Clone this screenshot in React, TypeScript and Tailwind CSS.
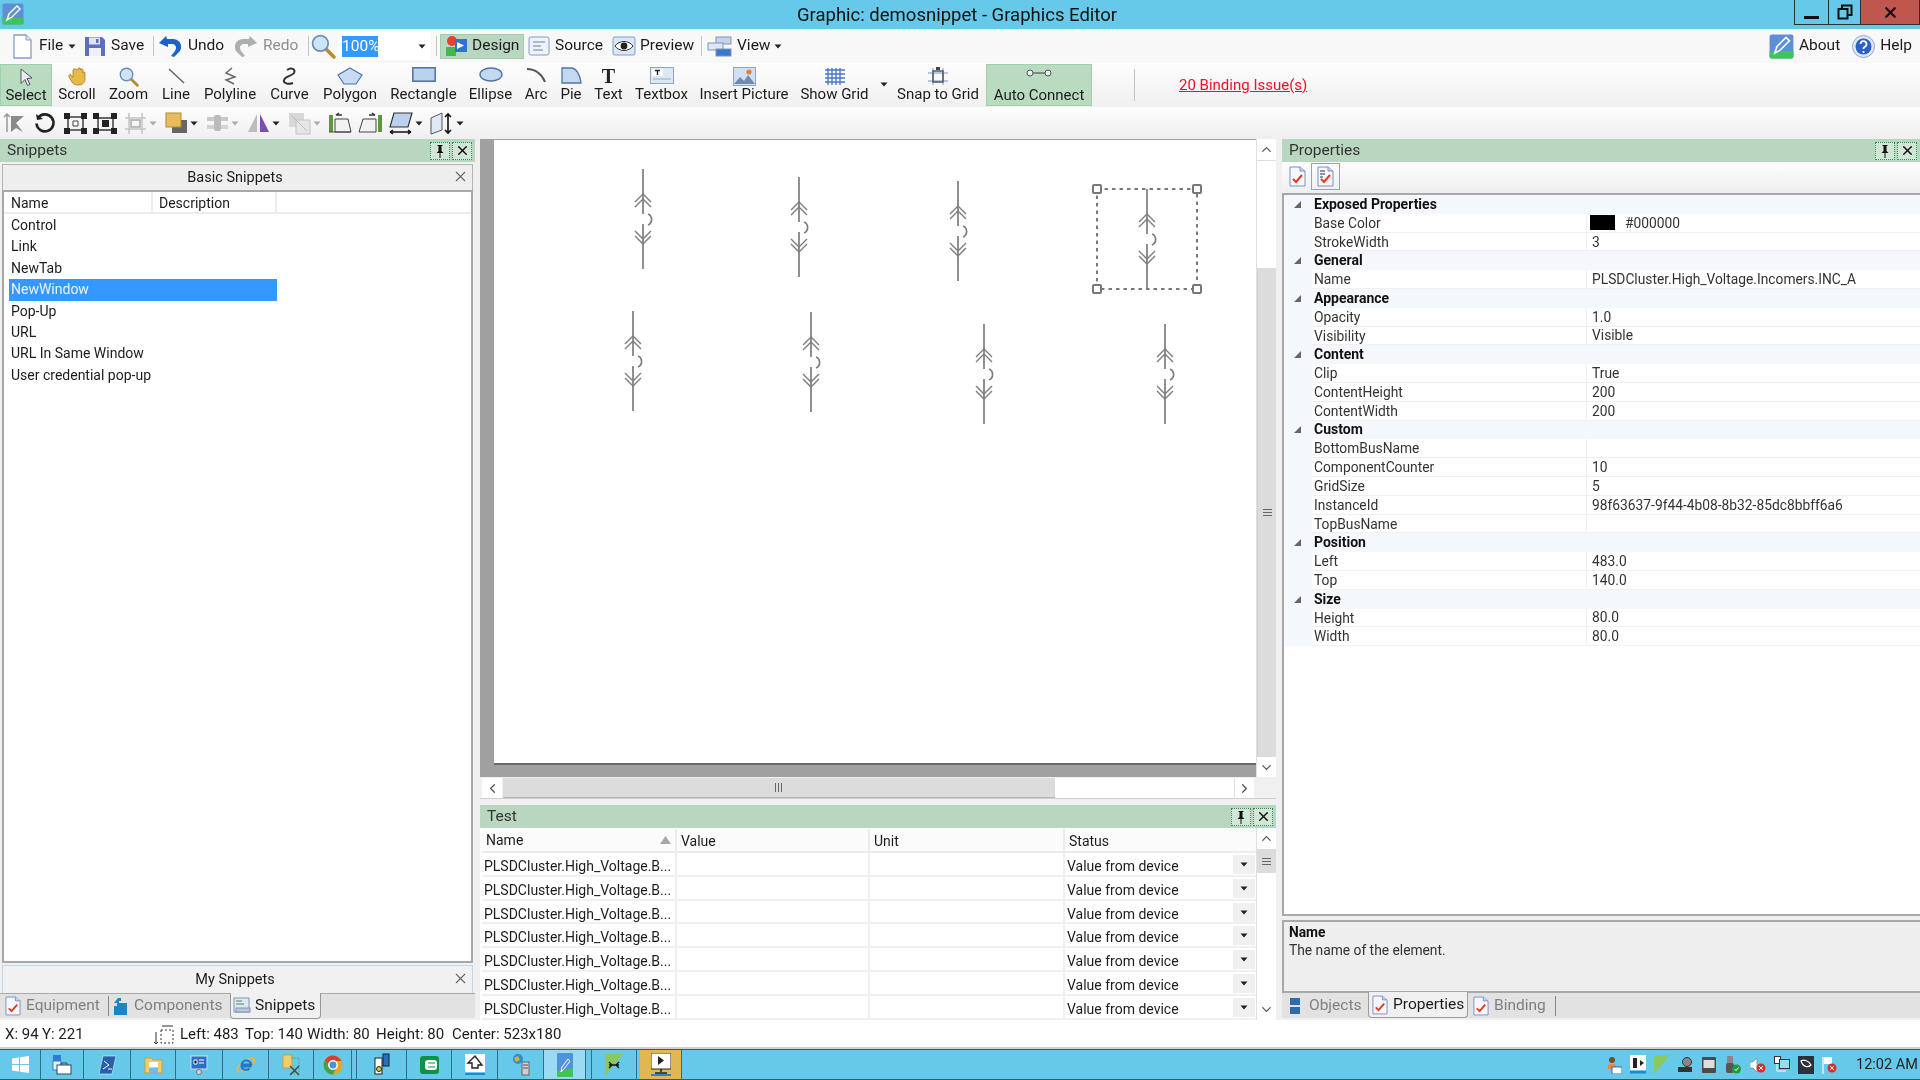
import React from "react";
import { ChevronUp, ChevronDown, ChevronLeft, ChevronRight, X } from "lucide-react";

const Ic = ({ w = 22, h = 22, vb = "0 0 22 22", children, className = "" }: any) => (
  <svg width={w} height={h} viewBox={vb} className={"shrink-0 " + className}>{children}</svg>
);
const Caret = ({ c = "#222" }: { c?: string }) => (
  <svg width="8" height="5" viewBox="0 0 8 5" className="shrink-0"><path d="M0.5 0.5h7L4 4.5z" fill={c} /></svg>
);
const Doc = ({ w = 21, h = 25 }: any) => (
  <Ic w={w} h={h} vb="0 0 21 25"><path d="M2 1h12l5 5v18H2z" fill="#fff" stroke="#8a9cc4" strokeWidth="1.3" /><path d="M14 1v5h5" fill="#dfe6f4" stroke="#8a9cc4" /></Ic>
);
const CheckDoc = ({ w = 17, h = 21, lines = false }: any) => (
  <Ic w={w} h={h} vb="0 0 17 21"><path d="M1 1h10l5 4v15H1z" fill="#f5f7fd" stroke="#7c8fc4" /><path d="M11 1v4h5" fill="#c9d4ee" stroke="#7c8fc4" />{lines && <path d="M3 5h5M3 8h5M3 11h3" stroke="#333" />}<path d="M4 13l3 3 6-7" fill="none" stroke="#e33b20" strokeWidth="2" /></Ic>
);
const Logo = ({ s = 22 }: any) => (
  <Ic w={s} h={s} vb="0 0 22 22"><rect x="0.5" y="0.5" width="21" height="21" rx="2" fill="#5c8fd6" /><path d="M0.5 15h21v5a1.5 1.5 0 0 1-1.5 1.5H2A1.5 1.5 0 0 1 .5 20z" fill="#3fc45a" /><path d="M5 17l2-6 8-8 3 3-8 8z" fill="none" stroke="#fff" strokeWidth="1.4" /></Ic>
);
const Glass = ({ s = 24 }: any) => (
  <Ic w={s} h={s} vb="0 0 24 24"><path d="M14 14l8 8" stroke="#b98a2e" strokeWidth="3.4" strokeLinecap="round" /><circle cx="9" cy="9" r="7.5" fill="#cfe3f7" stroke="#6c8db3" strokeWidth="1.6" /></Ic>
);

const Pin = () => (
  <span className="w-[20px] h-[18px] border border-dotted border-[#2f8f50] bg-[#d2e6d8] flex items-center justify-center">
    <svg width="10" height="14" viewBox="0 0 10 14"><path d="M2.5 1h5v1h-1v5l2 2H1.5l2-2V2h-1zM4.5 9h1v5h-1z" fill="#111" /></svg>
  </span>
);
const CloseB = () => (
  <span className="w-[20px] h-[18px] border border-dotted border-[#2f8f50] bg-[#d2e6d8] flex items-center justify-center">
    <X size={15} strokeWidth={2.4} color="#111" />
  </span>
);
const PanelHead = ({ title }: any) => (
  <div className="h-[23px] bg-[#b9d7c0] flex items-center justify-between pl-[7px] pr-[3px] text-[15.5px] text-[#333] shrink-0">
    <span>{title}</span>
    <span className="flex gap-[2px]"><Pin /><CloseB /></span>
  </div>
);

const Tool = ({ w, label, children, active }: any) => (
  <div className={w + " h-[42px] flex flex-col items-center shrink-0 " + (active ? "bg-[#b9dcc0] border border-[#9fd0a9]" : "")}>
    <div className="h-[20px] pt-[3px] flex items-start justify-center">{children}</div>
    <div className="text-[15px] leading-[20px] whitespace-nowrap text-[#1c1c1c]">{label}</div>
  </div>
);

const Sep = ({ cls = "" }: any) => <div className={"w-px h-[20px] bg-[#c4c4c4] shrink-0 " + cls} />;

const Symbol = ({ pos }: { pos: string }) => (
  <svg width="24" height="100" viewBox="0 0 24 100" className={"absolute " + pos}>
    <g fill="none" stroke="#7d7d7d" strokeWidth="1.7">
      <path d="M12 0v45M12 55v45" />
      <path d="M4 33l8-8 8 8M4 38l8-8 8 8" strokeWidth="1.4" />
      <path d="M4 62l8 8 8-8M4 67l8 8 8-8" strokeWidth="1.4" />
      <path d="M17 45a6 6 0 0 1 0 11" />
    </g>
  </svg>
);

const Handle = ({ pos }: { pos: string }) => <div className={"absolute w-[10px] h-[10px] border-2 border-[#777] bg-white rounded-[2px] " + pos} />;

const props: [string, string?, string?][] = [
  ["g", "Exposed Properties"], ["r", "Base Color", "#000000"], ["r", "StrokeWidth", "3"],
  ["g", "General"], ["r", "Name", "PLSDCluster.High_Voltage.Incomers.INC_A"],
  ["g", "Appearance"], ["r", "Opacity", "1.0"], ["r", "Visibility", "Visible"],
  ["g", "Content"], ["r", "Clip", "True"], ["r", "ContentHeight", "200"], ["r", "ContentWidth", "200"],
  ["g", "Custom"], ["r", "BottomBusName", ""], ["r", "ComponentCounter", "10"], ["r", "GridSize", "5"],
  ["r", "InstanceId", "98f63637-9f44-4b08-8b32-85dc8bbff6a6"], ["r", "TopBusName", ""],
  ["g", "Position"], ["r", "Left", "483.0"], ["r", "Top", "140.0"],
  ["g", "Size"], ["r", "Height", "80.0"], ["r", "Width", "80.0"],
];

const snippets = ["Control", "Link", "NewTab", "NewWindow", "Pop-Up", "URL", "URL In Same Window", "User credential pop-up"];

const TaskBtn = ({ w, cls = "", children }: any) => (
  <div className={w + " h-full border-r border-[#2f6f88] flex items-center justify-center shrink-0 " + cls}>{children}</div>
);

export default function App() {
  return (
    <div className="w-[1920px] h-[1080px] overflow-hidden flex flex-col bg-[#f0f0f0] font-['Roboto',sans-serif] text-[14px] text-[#1c1c1c] blur-[0.35px]">
      {/* Title bar */}
      <div className="h-[29px] bg-[#66c9ea] grid grid-cols-[126px_1fr_126px] shrink-0">
        <div className="pl-[2px] pt-[3px]"><Logo /></div>
        <div className="text-center text-[18.5px] leading-[30px] pr-[6px] text-[#111]">Graphic: demosnippet - Graphics Editor</div>
        <div className="flex h-[25px] border border-t-0 border-[#26323a]">
          <div className="w-[34px] border-r border-[#26323a] flex items-end justify-center pb-[5px]"><div className="w-[15px] h-[3px] bg-[#111]" /></div>
          <div className="w-[32px] border-r border-[#26323a] flex items-center justify-center">
            <svg width="16" height="16" viewBox="0 0 16 16"><path d="M1.5 5h9v9.500h-9zM5 4.500V1.500h9.500V11H11" fill="none" stroke="#111" strokeWidth="2" /></svg>
          </div>
          <div className="flex-1 bg-[#c0574f] flex items-center justify-center"><X size={17} strokeWidth={3.2} color="#111" /></div>
        </div>
      </div>

      {/* Menu row */}
      <div className="h-[34px] bg-[#f8f8f8] flex items-center shrink-0 pl-[12px] pr-[8px] text-[15.5px] whitespace-nowrap">
        <Doc />
        <span className="ml-[6px] w-[24px]">File</span>
        <span className="ml-[5px]"><Caret /></span>
        <span className="ml-[8px]">
          <Ic w={22} h={21} vb="0 0 22 21"><path d="M1 1h17l3 3v16H1z" fill="#5f6fc0" /><rect x="5" y="1.500" width="11" height="7" fill="#dfe4f7" /><rect x="5" y="12" width="12" height="8" fill="#eef0fa" /><rect x="12" y="3" width="2.500" height="4" fill="#5f6fc0" /></Ic>
        </span>
        <span className="ml-[5px] w-[31px]">Save</span>
        <Sep cls="ml-[11px]" />
        <span className="ml-[4px]">
          <Ic w={24} h={23} vb="0 0 24 23"><path d="M8 1L1 8l9 4V9h4c4 0 5 4 3 7l-4 5 3 1 6-6c3-5 0-12-7-12H9z" fill="#1c62c9" /></Ic>
        </span>
        <span className="ml-[6px] w-[36px]">Undo</span>
        <span className="ml-[10px]">
          <Ic w={24} h={23} vb="0 0 24 23"><path d="M16 1l7 7-9 4V9h-4C6 9 5 13 7 16l4 5-3 1-6-6C-1 11 2 4 9 4h6z" fill="#aab0b0" /></Ic>
        </span>
        <span className="ml-[5px] w-[33px] text-[#8f8f8f]">Redo</span>
        <Sep cls="ml-[12px]" />
        <span className="ml-[2px]"><Glass s={25} /></span>
        <div className="ml-[2px] w-[93px] h-[28px] bg-white flex items-center pl-[4px] pr-[5px] justify-between">
          <span className="bg-[#3399ff] text-white w-[36px] h-[21px] leading-[21px]">100%</span>
          <Caret />
        </div>
        <Sep cls="ml-[5px]" />
        <div className="ml-[3px] w-[84px] h-[25px] bg-[#b9d7c0] border border-[#9fcca9] flex items-center pl-[4px] gap-[4px]">
          <Ic w={23} h={22} vb="0 0 23 22"><circle cx="7" cy="6" r="5" fill="#e8402c" /><rect x="1" y="12" width="10" height="9" fill="#46b84a" /><path d="M10 4h12v13H10z" fill="#2b74d0" /><path d="M12 7l7 3.500-7 3.500z" fill="#fff" /></Ic>
          <span>Design</span>
        </div>
        <span className="ml-[4px]">
          <Ic w={22} h={20} vb="0 0 22 20"><rect x="1" y="1" width="20" height="18" rx="2" fill="#eef3fb" stroke="#7f9cc8" /><path d="M5 6h12M5 10h8M5 14h10" stroke="#6f7f96" /></Ic>
        </span>
        <span className="ml-[5px] w-[45px]">Source</span>
        <span className="ml-[12px]">
          <Ic w={24} h={20} vb="0 0 24 20"><rect x="1" y="1" width="22" height="18" rx="2" fill="#dbe7f7" stroke="#7f9cc8" /><path d="M3 10c4-6 14-6 18 0-4 6-14 6-18 0z" fill="#fff" stroke="#333" /><circle cx="12" cy="10" r="3.400" fill="#222" /></Ic>
        </span>
        <span className="ml-[4px] w-[50px]">Preview</span>
        <Sep cls="ml-[11px]" />
        <span className="ml-[5px]">
          <Ic w={25} h={21} vb="0 0 25 21"><rect x="9" y="1" width="15" height="7" fill="#c6d4ea" stroke="#7f94b8" /><rect x="1" y="7" width="15" height="7" fill="#dfe7f4" stroke="#7f94b8" /><rect x="9" y="13" width="15" height="7" fill="#3a78cf" stroke="#7f94b8" /></Ic>
        </span>
        <span className="ml-[5px] w-[30px]">View</span>
        <span className="ml-[7px]"><Caret /></span>
        <div className="flex-1" />
        <Logo s={25} />
        <span className="ml-[5px]">About</span>
        <span className="ml-[11px]">
          <Ic w={25} h={25} vb="0 0 25 25"><circle cx="12.500" cy="12.500" r="11" fill="#dfe6f4" stroke="#9aa9c9" /><circle cx="12.500" cy="12.500" r="8" fill="#2a5fc4" /><path d="M9.500 10a3 3 0 1 1 4 3c-1 .5-1 1-1 2" fill="none" stroke="#fff" strokeWidth="1.800" /><circle cx="12.500" cy="18" r="1.100" fill="#fff" /></Ic>
        </span>
        <span className="ml-[4px]">Help</span>
      </div>

      {/* Tool row */}
      <div className="h-[44px] bg-gradient-to-b from-[#fdfdfd] to-[#f0f0f0] flex items-center shrink-0">
        <Tool w="w-[52px]" label="Select" active>
          <Ic w={15} h={18} vb="0 0 15 18"><path d="M2 1l11 9-5 .5 3 6-2.500 1-2.500-6-4 4z" fill="#e8eef8" stroke="#555" /></Ic>
        </Tool>
        <Tool w="w-[50px]" label="Scroll">
          <Ic w={22} h={19} vb="0 0 22 19"><path d="M3 10l3 5c1 2 3 3 6 3 4 0 7-2 7-6V6c0-1.500-2-1.500-2 0V3c0-1.500-2.500-1.500-2.500 0V2c0-1.500-2.500-1.500-2.500 0v1C9.500 1.500 7 1.500 7 3v7L5 8c-1-1-3 0-2 2z" fill="#e9b84a" stroke="#a87b22" strokeWidth=".8" /></Ic>
        </Tool>
        <Tool w="w-[53px]" label="Zoom"><Glass s={20} /></Tool>
        <Tool w="w-[42px]" label="Line">
          <Ic w={20} h={18} vb="0 0 20 18"><path d="M3 2l15 14" stroke="#666" strokeWidth="1.500" /></Ic>
        </Tool>
        <Tool w="w-[66px]" label="Polyline">
          <Ic w={14} h={18} vb="0 0 14 18"><path d="M9 1L3 6l9 4-9 3 8 4" fill="none" stroke="#666" strokeWidth="1.400" /></Ic>
        </Tool>
        <Tool w="w-[53px]" label="Curve">
          <Ic w={16} h={19} vb="0 0 16 19"><path d="M5 3c4-3 9-1 7 3-2 3-9 3-10 7-1 3 4 5 9 3" fill="none" stroke="#333" strokeWidth="2" /></Ic>
        </Tool>
        <Tool w="w-[68px]" label="Polygon">
          <Ic w={26} h={18} vb="0 0 26 18"><path d="M13 1l12 7-6 9H7L1 8z" fill="#c7dcf2" stroke="#4f74a8" strokeWidth="1.200" /></Ic>
        </Tool>
        <Tool w="w-[79px]" label="Rectangle">
          <Ic w={24} h={15} vb="0 0 24 15"><rect x=".8" y=".8" width="22.400" height="13.400" fill="#b9d3ef" stroke="#4f6f9e" strokeWidth="1.500" /></Ic>
        </Tool>
        <Tool w="w-[55px]" label="Ellipse">
          <Ic w={24} h={15} vb="0 0 24 15"><ellipse cx="12" cy="7.500" rx="11" ry="6.500" fill="#c3d9f0" stroke="#4f74a8" strokeWidth="1.400" /></Ic>
        </Tool>
        <Tool w="w-[36px]" label="Arc">
          <Ic w={20} h={16} vb="0 0 20 16"><path d="M1 2c8 0 15 5 18 13" fill="none" stroke="#555" strokeWidth="2" /></Ic>
        </Tool>
        <Tool w="w-[34px]" label="Pie">
          <Ic w={21} h={17} vb="0 0 21 17"><path d="M1 1h9c5 0 9 6 10 15H1z" fill="#c3d9f0" stroke="#4f74a8" strokeWidth="1.300" /></Ic>
        </Tool>
        <Tool w="w-[41px]" label="Text">
          <span className="font-['Liberation_Serif',serif] font-bold text-[20px] leading-[18px] text-[#222]">T</span>
        </Tool>
        <Tool w="w-[65px]" label="Textbox">
          <Ic w={24} h={17} vb="0 0 24 17"><rect x=".5" y=".5" width="23" height="16" fill="#dce8f5" stroke="#8fa6c4" /><rect x="2" y="2" width="11" height="7" fill="#fff" /><path d="M5 3.500h5M7.500 3.500v4.500" stroke="#222" strokeWidth="1.400" /><path d="M3 12h18" stroke="#9ab" /></Ic>
        </Tool>
        <Tool w="w-[100px]" label="Insert Picture">
          <Ic w={23} h={19} vb="0 0 23 19"><rect x=".5" y=".5" width="22" height="18" fill="#cfe0f2" stroke="#8fa6c4" /><path d="M1 17l6-7 4 4 4-6 7 9z" fill="#6f8cb0" /><circle cx="16" cy="5" r="2.600" fill="#e8803a" /></Ic>
        </Tool>
        <Tool w="w-[81px]" label="Show Grid">
          <Ic w={22} h={19} vb="0 0 22 19"><path d="M4 1v17M8 1v17M12 1v17M16 1v17M1 3h20M1 7h20M1 11h20M1 15h20" stroke="#4a78c9" strokeWidth="1.400" /></Ic>
        </Tool>
        <div className="w-[15px] h-[42px] pt-[18px] pl-[5px] shrink-0"><Caret /></div>
        <Tool w="w-[96px]" label="Snap to Grid">
          <Ic w={24} h={19} vb="0 0 24 19"><path d="M2 6h20M2 14h20M7 1v17M17 1v17" stroke="#9ab8dc" strokeWidth="1.400" /><rect x="7" y="4" width="10" height="11" fill="none" stroke="#556" strokeWidth="1.500" /><rect x="10" y="0" width="4" height="3" fill="#445" /></Ic>
        </Tool>
        <Tool w="w-[106px]" label="Auto Connect" active>
          <Ic w={26} h={10} vb="0 0 26 10"><circle cx="4" cy="5" r="3" fill="#e8eef4" stroke="#555" /><circle cx="22" cy="5" r="3" fill="#e8eef4" stroke="#555" /><path d="M7 5h12" stroke="#555" strokeWidth="1.200" /></Ic>
        </Tool>
        <div className="ml-[42px] w-px h-[32px] bg-[#c4c4c4]" />
        <a className="ml-[44px] text-[#f0102a] underline text-[15px]">20 Binding Issue(s)</a>
      </div>

      {/* Icon row */}
      <div className="h-[32px] bg-gradient-to-b from-[#fdfdfd] to-[#efefef] flex items-center pl-[3px] shrink-0">
        <Ic w={22} h={22}><path d="M4 2v18M1 5l3-3 3 3" stroke="#999" strokeWidth="1.500" fill="none" /><path d="M8 4h13L13 11l7 9-7-4-5 4z" fill="#8a8a8a" /></Ic>
        <span className="ml-[8px]"><Ic w={23} h={23} vb="0 0 23 23"><path d="M5 6a8.500 8.500 0 1 1-1.500 5.500" fill="none" stroke="#222" strokeWidth="2.600" /><path d="M3 2l1 6 6-1z" fill="#222" /></Ic></span>
        <span className="ml-[7px]"><Ic w={25} h={23} vb="0 0 25 23"><rect x="5" y="5" width="15" height="13" fill="none" stroke="#333" strokeWidth="1.400" /><path d="M1 1h6v6H1zM18 1h6v6h-6zM1 16h6v6H1zM18 16h6v6h-6z" fill="#222" /><path d="M10 9h5v5h-5z" fill="#fff" stroke="#444" /></Ic></span>
        <span className="ml-[4px]"><Ic w={26} h={23} vb="0 0 26 23"><path d="M6 6h15v12H6z" fill="none" stroke="#333" strokeWidth="1.400" /><path d="M1 1h6v6H1zM19 1h6v6h-6zM1 16h6v6H1zM19 16h6v6h-6zM10 8h7v7h-7z" fill="#222" /></Ic></span>
        <span className="ml-[6px]"><Ic w={23} h={23} vb="0 0 23 23"><path d="M5 1v21M18 1v21M1 6h21M1 17h21" stroke="#c3c3c3" strokeWidth="1.500" /><rect x="7" y="8" width="9" height="7" fill="none" stroke="#aaa" strokeWidth="1.500" /></Ic></span>
        <span className="ml-[2px]"><Caret c="#aaa" /></span>
        <span className="ml-[8px]"><Ic w={23} h={22} vb="0 0 23 22"><rect x="7" y="8" width="15" height="13" fill="#666" /><rect x="1" y="1" width="15" height="14" fill="#e8bc5a" stroke="#b48a2e" /></Ic></span>
        <span className="ml-[2px]"><Caret /></span>
        <span className="ml-[8px]"><Ic w={23} h={22} vb="0 0 23 22"><rect x="1" y="5" width="21" height="4" fill="#c9c9c9" /><rect x="1" y="13" width="21" height="4" fill="#d4d4d4" /><rect x="8" y="3" width="7" height="16" rx="2" fill="#bbb" /></Ic></span>
        <span className="ml-[2px]"><Caret c="#aaa" /></span>
        <span className="ml-[8px]"><Ic w={23} h={22} vb="0 0 23 22"><path d="M10 2v18H1z" fill="#b9bcc4" /><path d="M13 2v18h9z" fill="#7c4cb0" /></Ic></span>
        <span className="ml-[2px]"><Caret /></span>
        <span className="ml-[8px]"><Ic w={23} h={23} vb="0 0 23 23"><rect x="1" y="1" width="15" height="14" fill="#d8d8d8" /><rect x="8" y="8" width="14" height="14" fill="#e6e6e6" stroke="#c4c4c4" /><path d="M3 3l16 16" stroke="#bbb" /></Ic></span>
        <span className="ml-[2px]"><Caret c="#aaa" /></span>
        <span className="ml-[7px]"><Ic w={24} h={22} vb="0 0 24 22"><rect x="1" y="3" width="4" height="17" fill="#5a9a3c" /><path d="M7 20V7h13l3 13z" fill="#f2f2f2" stroke="#444" /><path d="M8 3h6M8 3l3-2" stroke="#333" strokeWidth="1.400" /><path d="M1 20h22" stroke="#444" /></Ic></span>
        <span className="ml-[6px]"><Ic w={25} h={22} vb="0 0 25 22"><rect x="20" y="3" width="4" height="17" fill="#5a9a3c" /><path d="M18 20V7H5L1 20z" fill="#f2f2f2" stroke="#444" /><path d="M17 3h-6M17 3l-3-2" stroke="#333" strokeWidth="1.400" /></Ic></span>
        <span className="ml-[5px]"><Ic w={25} h={23} vb="0 0 25 23"><path d="M6 1h18l-4 14H2z" fill="#bcd2ec" stroke="#333" strokeWidth="1.200" /><path d="M2 20h21M2 20l3-2M2 20l3 2M23 20l-3-2M23 20l-3 2" stroke="#111" strokeWidth="1.500" fill="none" /></Ic></span>
        <span className="ml-[2px]"><Caret /></span>
        <span className="ml-[7px]"><Ic w={25} h={23} vb="0 0 25 23"><path d="M1 6l11-5v17L1 22z" fill="#dfe8f5" stroke="#555" /><path d="M18 2v19M15 5l3-3 3 3M15 18l3 3 3-3" stroke="#111" strokeWidth="1.600" fill="none" /></Ic></span>
        <span className="ml-[1px]"><Caret /></span>
      </div>

      {/* Main */}
      <div className="h-[881px] flex shrink-0">
        {/* Left */}
        <div className="w-[475px] flex flex-col shrink-0">
          <PanelHead title="Snippets" />
          <div className="mx-[2px] mt-[2px] h-[26px] bg-[#eeeeee] border border-b-0 border-[#b4b4b4] relative flex items-center justify-center pr-[5px] text-[14.500px] shrink-0">
            Basic Snippets
            <X size={17} strokeWidth={1.600} color="#666" className="absolute right-[3px] top-[3px]" />
          </div>
          <div className="mx-[2px] flex-1 bg-white border-2 border-[#a8a8a8]">
            <div className="h-[22px] flex text-[14px] leading-[23px] border-b-2 border-[#ebebeb] pl-[1px]">
              <div className="w-[148px] pl-[6px] border-r-2 border-[#ebebeb]">Name</div>
              <div className="w-[124px] pl-[6px] border-r-2 border-[#ebebeb]">Description</div>
            </div>
            <div className="pt-[1px] pl-[5px]">
              {snippets.map((s) => (
                <div key={s} className={"h-[21.400px] leading-[21px] pl-[2px] text-[14px] whitespace-nowrap w-[268px] " + (s === "NewWindow" ? "bg-[#3399ff] text-[#eaf4ff]" : "")}>{s}</div>
              ))}
            </div>
          </div>
          <div className="mx-[2px] mt-[2px] h-[28px] bg-[#f1f1f1] border border-b-0 border-[#bcd7f0] relative flex items-center justify-center pr-[5px] text-[14.500px] shrink-0">
            My Snippets
            <X size={17} strokeWidth={1.600} color="#666" className="absolute right-[3px] top-[4px]" />
          </div>
          <div className="h-[25px] bg-[#e2e2e2] border-t border-[#a8a8a8] flex items-center text-[15.500px] shrink-0 pl-[5px] relative whitespace-nowrap">
            <CheckDoc w={16} h={20} />
            <span className="ml-[5px] w-[73px] text-[#808080]">Equipment</span>
            <div className="ml-[9px] w-px h-[20px] bg-[#888]" />
            <span className="ml-[4px]"><Ic w={16} h={18} vb="0 0 16 18"><path d="M5 1h3v3h-2v2h8v12H1V9h3V6H1z" fill="#1a86c8" /></Ic></span>
            <span className="ml-[5px] w-[87px] text-[#808080]">Components</span>
            <div className="ml-[9px] w-[91px] h-[26px] bg-[#f0f0f0] border border-t-0 border-[#9a9a9a] rounded-b-[4px] flex items-center pl-[2px] gap-[4px] text-[#1c1c1c]">
              <Ic w={18} h={17} vb="0 0 18 17"><rect x="1" y="1" width="15" height="14" fill="#dfe8f2" stroke="#7f94b8" /><path d="M3 4h6M3 7h8" stroke="#4c8c4c" /><rect x="3" y="11" width="14" height="4" fill="#bcc7d6" stroke="#7f94b8" /></Ic>
              <span>Snippets</span>
            </div>
          </div>
          <div className="h-[2px] shrink-0" />
        </div>

        {/* Center */}
        <div className="w-[796px] ml-[5px] flex flex-col shrink-0">
          <div className="h-[638px] flex shrink-0">
            <div className="w-[776px] bg-[#a0a0a0] pl-[14px] pt-[1px] shrink-0">
              <div className="w-[762px] h-[625px] bg-white relative border-b-2 border-[#6a6a6a]">
                <Symbol pos="left-[137px] top-[29px]" />
                <Symbol pos="left-[293px] top-[36.500px]" />
                <Symbol pos="left-[452px] top-[41px]" />
                <Symbol pos="left-[641px] top-[49px]" />
                <Symbol pos="left-[127px] top-[171px]" />
                <Symbol pos="left-[305px] top-[172px]" />
                <Symbol pos="left-[478px] top-[184px]" />
                <Symbol pos="left-[659px] top-[184px]" />
                <svg width="110" height="110" viewBox="0 0 110 110" className="absolute left-[598px] top-[44px]">
                  <rect x="5" y="5" width="100" height="100" fill="none" stroke="#7a7a7a" strokeWidth="2" strokeDasharray="3.500 4" />
                </svg>
                <Handle pos="left-[598px] top-[44px]" />
                <Handle pos="left-[698px] top-[44px]" />
                <Handle pos="left-[598px] top-[144px]" />
                <Handle pos="left-[698px] top-[144px]" />
              </div>
            </div>
            <div className="w-[20px] bg-white flex flex-col border-l border-[#e0e0e0] shrink-0">
              <div className="h-[22px] flex items-center justify-center border-b border-[#ddd] shrink-0"><ChevronUp size={15} color="#555" /></div>
              <div className="h-[107px] shrink-0" />
              <div className="flex-1 bg-[#dcdcdc] flex flex-col items-center justify-center gap-[2px] border-l border-[#cfcfcf]">
                <div className="w-[9px] h-px bg-[#666]" /><div className="w-[9px] h-px bg-[#666]" /><div className="w-[9px] h-px bg-[#666]" />
              </div>
              <div className="h-[20px] flex items-center justify-center shrink-0"><ChevronDown size={15} color="#555" /></div>
            </div>
          </div>
          <div className="h-[20px] mt-[1px] flex items-stretch pl-[2px] bg-[#f0f0f0] shrink-0">
            <div className="w-[20px] bg-white flex items-center justify-center"><ChevronLeft size={15} color="#555" /></div>
            <div className="w-[552px] ml-[1px] bg-[#dcdcdc] border-b border-[#b4b4b4] flex items-center justify-center gap-[2px] pr-[2px]">
              <div className="w-px h-[9px] bg-[#666]" /><div className="w-px h-[9px] bg-[#666]" /><div className="w-px h-[9px] bg-[#666]" />
            </div>
            <div className="w-[179px] bg-white" />
            <div className="w-[20px] bg-white border-l border-[#ddd] flex items-center justify-center"><ChevronRight size={15} color="#555" /></div>
          </div>
          <div className="h-[7px] shrink-0 border-t border-[#cfcfcf]" />
          <PanelHead title="Test" />
          <div className="flex-1 flex border-b-2 border-[#b0b0b0] bg-white">
            <div className="w-[776px] shrink-0 pl-[2px] pt-[1px]">
              <div className="h-[24px] grid grid-cols-[195px_193px_195px_1fr] grid-rows-[22px] text-[14px] leading-[24px] border-b-2 border-[#ebebeb] bg-[#fbfbfb]">
                <div className="pl-[4px] border-r-2 border-[#ebebeb] flex items-center justify-between pr-[4px]">Name<svg width="11" height="8" viewBox="0 0 11 8"><path d="M5.500 0L11 8H0z" fill="#a8a8a8" /></svg></div>
                <div className="pl-[4px] border-r-2 border-[#ebebeb]">Value</div>
                <div className="pl-[4px] border-r-2 border-[#ebebeb]">Unit</div>
                <div className="pl-[4px]">Status</div>
              </div>
              {[0, 1, 2, 3, 4, 5, 6].map((i) => (
                <div key={i} className="h-[23.800px] grid grid-cols-[195px_193px_195px_1fr] grid-rows-[21.800px] text-[14px] leading-[22px] border-b-2 border-[#f0f0f0]">
                  <div className="pl-[2px] pt-[2px] border-r-2 border-[#f0f0f0] whitespace-nowrap overflow-hidden">PLSDCluster.High_Voltage.B...</div>
                  <div className="border-r-2 border-[#f0f0f0]" />
                  <div className="border-r-2 border-[#f0f0f0]" />
                  <div className="pl-[2px] flex justify-between">
                    <span className="pt-[2px]">Value from device</span>
                    <span className="w-[22px] h-[19px] mt-[2px] mr-[1px] bg-[#f0f0f0] flex items-center justify-center"><Caret /></span>
                  </div>
                </div>
              ))}
            </div>
            <div className="flex-1 flex flex-col border-l border-[#e0e0e0]">
              <div className="h-[21px] flex items-center justify-center shrink-0"><ChevronUp size={15} color="#555" /></div>
              <div className="h-[24px] bg-[#dcdcdc] flex flex-col items-center justify-center gap-[2px] shrink-0">
                <div className="w-[9px] h-px bg-[#666]" /><div className="w-[9px] h-px bg-[#666]" /><div className="w-[9px] h-px bg-[#666]" />
              </div>
              <div className="flex-1" />
              <div className="h-[20px] flex items-center justify-center shrink-0"><ChevronDown size={15} color="#555" /></div>
            </div>
          </div>
          <div className="h-[2px] shrink-0" />
        </div>

        {/* Right */}
        <div className="flex-1 ml-[6px] flex flex-col min-w-0">
          <PanelHead title="Properties" />
          <div className="h-[31px] bg-gradient-to-b from-[#fdfdfd] to-[#efefef] flex items-start pt-[1px] pl-[7px] shrink-0">
            <span className="pt-[3px]"><CheckDoc /></span>
            <div className="ml-[5px] w-[29px] h-[27px] border border-[#66adff] flex items-center justify-center"><CheckDoc lines /></div>
          </div>
          <div className="h-[723px] border-2 border-r-0 border-[#a8a8a8] bg-white shrink-0">
            {props.map(([t, a, b]) =>
              t === "g" ? (
                <div key={a} className="h-[18.800px] bg-[#f4f7fc] flex items-center font-bold text-[14px] text-[#111] whitespace-nowrap">
                  <span className="w-[28px] pl-[9px]"><svg width="9" height="9" viewBox="0 0 9 9"><path d="M8 1v7H1z" fill="#666" /></svg></span>
                  <span className="pl-[2px]">{a}</span>
                </div>
              ) : (
                <div key={a} className="h-[18.800px] flex items-stretch bg-[#f4f7fc] text-[13.800px] text-[#333]">
                  <div className="w-[28px] shrink-0" />
                  <div className="w-[275px] shrink-0 bg-white pl-[2px] leading-[18px] border-b border-[#f0f0f0] border-r">{a}</div>
                  <div className="flex-1 bg-white pl-[5px] leading-[18px] border-b border-[#f0f0f0] flex items-center whitespace-nowrap">
                    {a === "Base Color" && <span className="w-[25px] h-[15px] bg-black mr-[10px] -ml-[2px] shrink-0" />}
                    {b}
                  </div>
                </div>
              )
            )}
          </div>
          <div className="mt-[4px] flex-1 bg-[#eeeeee] border-2 border-r-0 border-[#a8a8a8] pl-[5px] pt-[1px] text-[13.800px] leading-[18px]">
            <div className="font-bold text-[#111]">Name</div>
            <div className="text-[#333]">The name of the element.</div>
          </div>
          <div className="h-[25px] bg-[#e2e2e2] flex items-center text-[15.500px] pl-[7px] shrink-0 whitespace-nowrap">
            <Ic w={12} h={20} vb="0 0 12 20"><rect x="1" y="2" width="10" height="7" fill="#2d6cab" /><rect x="1" y="11" width="10" height="7" fill="#2d6cab" /></Ic>
            <span className="ml-[8px] w-[50px] text-[#808080]">Objects</span>
            <div className="ml-[9px] w-[100px] h-[26px] -mt-[1px] bg-[#f0f0f0] border border-t-0 border-[#9a9a9a] rounded-b-[4px] flex items-center pl-[3px] gap-[5px] text-[#1c1c1c]">
              <CheckDoc w={16} h={20} />
              <span>Properties</span>
            </div>
            <span className="ml-[5px]"><CheckDoc w={16} h={20} /></span>
            <span className="ml-[5px] w-[52px] text-[#808080]">Binding</span>
            <div className="ml-[9px] w-px h-[20px] bg-[#888]" />
          </div>
          <div className="h-[2px] shrink-0" />
        </div>
      </div>

      {/* Status bar */}
      <div className="h-[29px] bg-white flex items-center shrink-0 text-[15px] pl-[5px] pt-[1px] border-b-2 border-b-[#cfcfcf] whitespace-nowrap">
        <span className="w-[37px]">X: 94</span>
        <span className="w-[111px]">Y: 221</span>
        <Ic w={21} h={21} vb="0 0 21 21"><path d="M3 8v12M1 18l2 2 2-2M9 2h11" stroke="#333" fill="none" /><rect x="8" y="6" width="12" height="13" fill="none" stroke="#333" strokeDasharray="2 2" /></Ic>
        <span className="ml-[6px] w-[65px]">Left: 483</span>
        <span className="w-[62px]">Top: 140</span>
        <span className="w-[69px]">Width: 80</span>
        <span className="w-[76px]">Height: 80</span>
        <span>Center: 523x180</span>
      </div>

      {/* Taskbar */}
      <div className="h-[31px] bg-[#66c9ea] border-t border-b border-[#3a5a68] flex items-center shrink-0">
        <TaskBtn w="w-[41px]"><svg width="17" height="17" viewBox="0 0 17 17"><path d="M0 2.500l7-1v6.500H0zM8 1.300l9-1.300v8H8zM0 9h7v6.500l-7-1zM8 9h9v8l-9-1.300z" fill="#fff" /></svg></TaskBtn>
        <TaskBtn w="w-[43px]"><Ic w={20} h={22} vb="0 0 20 22"><rect x="1" y="1" width="8" height="6" fill="#2d7cd6" /><rect x="1" y="7" width="8" height="9" fill="#eef" stroke="#2d7cd6" /><rect x="5" y="11" width="14" height="9" fill="#fff" stroke="#345" /><path d="M9 11V9h6v2" fill="none" stroke="#345" /></Ic></TaskBtn>
        <TaskBtn w="w-[47px]"><Ic w={17} h={20} vb="0 0 17 20"><path d="M4 1h13l-4 18H0z" fill="#2b5ea8" stroke="#cfe" strokeWidth=".6" /><path d="M5 6l5 4-6 4M9 14h4" stroke="#fff" fill="none" /></Ic></TaskBtn>
        <TaskBtn w="w-[45px]"><Ic w={19} h={19} vb="0 0 19 19"><path d="M1 3h6l2 2h9v13H1z" fill="#f2ce6b" stroke="#c99e3a" /><rect x="5" y="7" width="9" height="5" fill="#fff" /><rect x="5" y="13" width="9" height="5" fill="#7cb6e6" /></Ic></TaskBtn>
        <TaskBtn w="w-[47px]"><Ic w={18} h={20} vb="0 0 18 20"><rect x="1" y="1" width="16" height="13" fill="#2b6fc0" stroke="#cde" /><path d="M4 5h3v4H4zM9 5h5M9 8h5" stroke="#fff" /><circle cx="9" cy="17" r="2.500" fill="#d6d6d6" stroke="#777" /></Ic></TaskBtn>
        <TaskBtn w="w-[46px]"><Ic w={22} h={22} vb="0 0 22 22"><ellipse cx="11" cy="11" rx="10" ry="4" fill="none" stroke="#f2b632" strokeWidth="1.500" transform="rotate(-35 11 11)" /><path d="M16.500 12.500H6.500a4.800 4.800 0 1 1 9.800-2H7M6.700 13c1 3.500 6 3.500 7.800 1.500" fill="none" stroke="#1e78d0" strokeWidth="2" /></Ic></TaskBtn>
        <TaskBtn w="w-[45px]"><Ic w={22} h={22} vb="0 0 22 22"><rect x="3" y="1" width="9" height="13" fill="#f2ce6b" stroke="#c99e3a" /><path d="M11 4h8v15h-8" fill="none" stroke="#5ba05b" strokeDasharray="1.500 1.500" /><path d="M10 12l9 9M19 12l-9 9" stroke="#444" strokeWidth="1.400" /></Ic></TaskBtn>
        <TaskBtn w="w-[38px]"><Ic w={20} h={20} vb="0 0 20 20"><circle cx="10" cy="10" r="9.500" fill="#e2a824" /><path d="M10 .5a9.500 9.500 0 0 0-8.200 4.800L6 11l4-5h8.300A9.500 9.500 0 0 0 10 .5z" fill="#d8412f" /><path d="M1.800 5.300A9.500 9.500 0 0 0 10 19.500L13 13 6 11z" fill="#3aa64a" /><circle cx="10" cy="10" r="4.200" fill="#4a8fe0" stroke="#fff" strokeWidth="1.500" /></Ic></TaskBtn>
        <div className="w-[5px] h-full border-r border-[#2f6f88] shrink-0" />
        <TaskBtn w="w-[50px]"><Ic w={16} h={23} vb="0 0 16 23"><rect x="1" y="5" width="7" height="16" fill="#fff" stroke="#222" /><rect x="9" y="1" width="6" height="12" fill="#2b6fc0" stroke="#222" /><circle cx="5" cy="16" r="2.500" fill="#d4d430" stroke="#222" /></Ic></TaskBtn>
        <TaskBtn w="w-[45px]"><Ic w={21} h={20} vb="0 0 21 20"><rect x="1" y="1" width="19" height="18" rx="3" fill="#0f9147" /><rect x="6" y="5" width="12" height="10" rx="3" fill="#fff" /><path d="M9 8h7M9 12h7" stroke="#0f9147" /></Ic></TaskBtn>
        <TaskBtn w="w-[46px]"><Ic w={20} h={23} vb="0 0 20 23"><rect x="0" y="1" width="20" height="18" fill="#fff" /><path d="M10 3L3 10h4v5h6v-3h4z" fill="none" stroke="#222" strokeWidth="1.400" /><rect x="0" y="20" width="20" height="2" fill="#1e88d8" /></Ic></TaskBtn>
        <TaskBtn w="w-[46px]"><Ic w={20} h={24} vb="0 0 20 24"><circle cx="7" cy="6" r="5" fill="#2b8fd0" /><path d="M3 5l4-2 2 4-4 2z" fill="#d8b430" /><rect x="11" y="9" width="7" height="13" fill="#cfcfcf" stroke="#666" /><path d="M12 12h5M12 15h5" stroke="#555" /></Ic></TaskBtn>
        <TaskBtn w="w-[42px]" cls="bg-[#9bdaf3]"><Ic w={16} h={24} vb="0 0 16 24"><rect x="0" y="0" width="16" height="24" rx="1" fill="#4f93d8" /><path d="M0 18l16-3v8a1 1 0 0 1-1 1H1a1 1 0 0 1-1-1z" fill="#3fc45a" /><path d="M4 19l1-5 6-8 2 2-6 8z" fill="none" stroke="#fff" /></Ic></TaskBtn>
        <div className="w-[6px] h-full border-r border-[#2f6f88] shrink-0" />
        <TaskBtn w="w-[45px]"><Ic w={18} h={22} vb="0 0 18 22"><path d="M0 0h18L0 22z" fill="#8cc860" /><path d="M4 11h10M4 8l3 3-3 3M14 8l-3 3 3 3" stroke="#111" strokeWidth="1.300" fill="none" /></Ic></TaskBtn>
        <div className="w-[3px] h-full shrink-0" />
        <TaskBtn w="w-[42px]" cls="bg-[#e1b84f]"><Ic w={20} h={23} vb="0 0 20 23"><rect x="0" y="0" width="20" height="16" fill="#fff" stroke="#222" /><path d="M7 3l6 4.500-6 4.500z" fill="#222" /><path d="M10 16v3M4 20h12" stroke="#222" strokeWidth="1.500" /><rect x="0" y="21" width="20" height="2" fill="#1e88d8" /></Ic></TaskBtn>
        <div className="flex-1" />
        <div className="flex items-center w-[240px] shrink-0">
          <span className="w-[24px] flex justify-center"><Ic w={16} h={18} vb="0 0 16 18"><circle cx="6" cy="4" r="3" fill="#7a4b2a" /><path d="M2 10c1-3 7-3 8 0v3H2z" fill="#e08a3c" /><rect x="6" y="11" width="10" height="7" fill="#fff" stroke="#36c" /></Ic></span>
          <span className="w-[24px] flex justify-center"><Ic w={16} h={19} vb="0 0 16 19"><rect x="0" y="0" width="16" height="15" fill="#fff" /><path d="M3 3h4v10H3zM10 5l4 3-4 3z" fill="#222" /><rect x="0" y="16" width="16" height="2.500" fill="#1e88d8" /></Ic></span>
          <span className="w-[24px] flex justify-center"><Ic w={16} h={19} vb="0 0 16 19"><path d="M0 0h16L0 19z" fill="#8cc860" /></Ic></span>
          <span className="w-[22px] flex justify-center"><Ic w={14} h={16} vb="0 0 14 16"><circle cx="9" cy="5" r="4.500" fill="#888" stroke="#333" /><rect x="0" y="10" width="14" height="5" fill="#333" /></Ic></span>
          <span className="w-[25px] flex justify-center"><Ic w={14} h={16} vb="0 0 14 16"><rect x="0" y="0" width="14" height="16" rx="1" fill="#4a4a4a" /><rect x="1.500" y="3" width="11" height="8" fill="#ddd" /></Ic></span>
          <span className="w-[24px] flex justify-center"><Ic w={16} h={19} vb="0 0 16 19"><rect x="2" y="1" width="6" height="7" fill="#888" /><rect x="1" y="8" width="8" height="10" rx="2" fill="#555" /><circle cx="11.500" cy="14" r="4.500" fill="#1d9b3b" /><path d="M9.500 14l1.500 1.500 2.500-3" stroke="#fff" fill="none" /></Ic></span>
          <span className="w-[25px] flex justify-center"><Ic w={16} h={18} vb="0 0 16 18"><path d="M0 6h3l4-4v14l-4-4H0z" fill="#fff" stroke="#777" strokeWidth=".6" /><circle cx="11" cy="12" r="4.500" fill="#d92d2d" /><path d="M9 10l4 4M13 10l-4 4" stroke="#fff" /></Ic></span>
          <span className="w-[24px] flex justify-center"><Ic w={16} h={18} vb="0 0 16 18"><rect x="0.500" y="0.500" width="6" height="7" fill="#fff" stroke="#333" /><rect x="5.500" y="3.500" width="10" height="9" fill="#9bdaf3" stroke="#333" /><path d="M3 8v7h9" stroke="#fff" fill="none" /></Ic></span>
          <span className="w-[24px] flex justify-center"><Ic w={16} h={18} vb="0 0 16 18"><rect x="0" y="0" width="16" height="18" fill="#2b3138" /><path d="M3 5c3-2 8 0 10 4-3 3-8 2-10-4z" fill="none" stroke="#fff" strokeWidth="1.200" /></Ic></span>
          <span className="ml-[4px]"><Ic w={15} h={18} vb="0 0 15 18"><path d="M1 1v17" stroke="#eee" strokeWidth="1.500" /><path d="M2 1h8v7H2z" fill="#fff" /><circle cx="10" cy="12" r="4.500" fill="#d92d2d" /><path d="M8 10l4 4M12 10l-4 4" stroke="#fff" /></Ic></span>
        </div>
        <span className="ml-[14px] w-[64px] text-[14.500px] shrink-0 text-[#222] whitespace-nowrap">12:02 AM</span>
      </div>
    </div>
  );
}
